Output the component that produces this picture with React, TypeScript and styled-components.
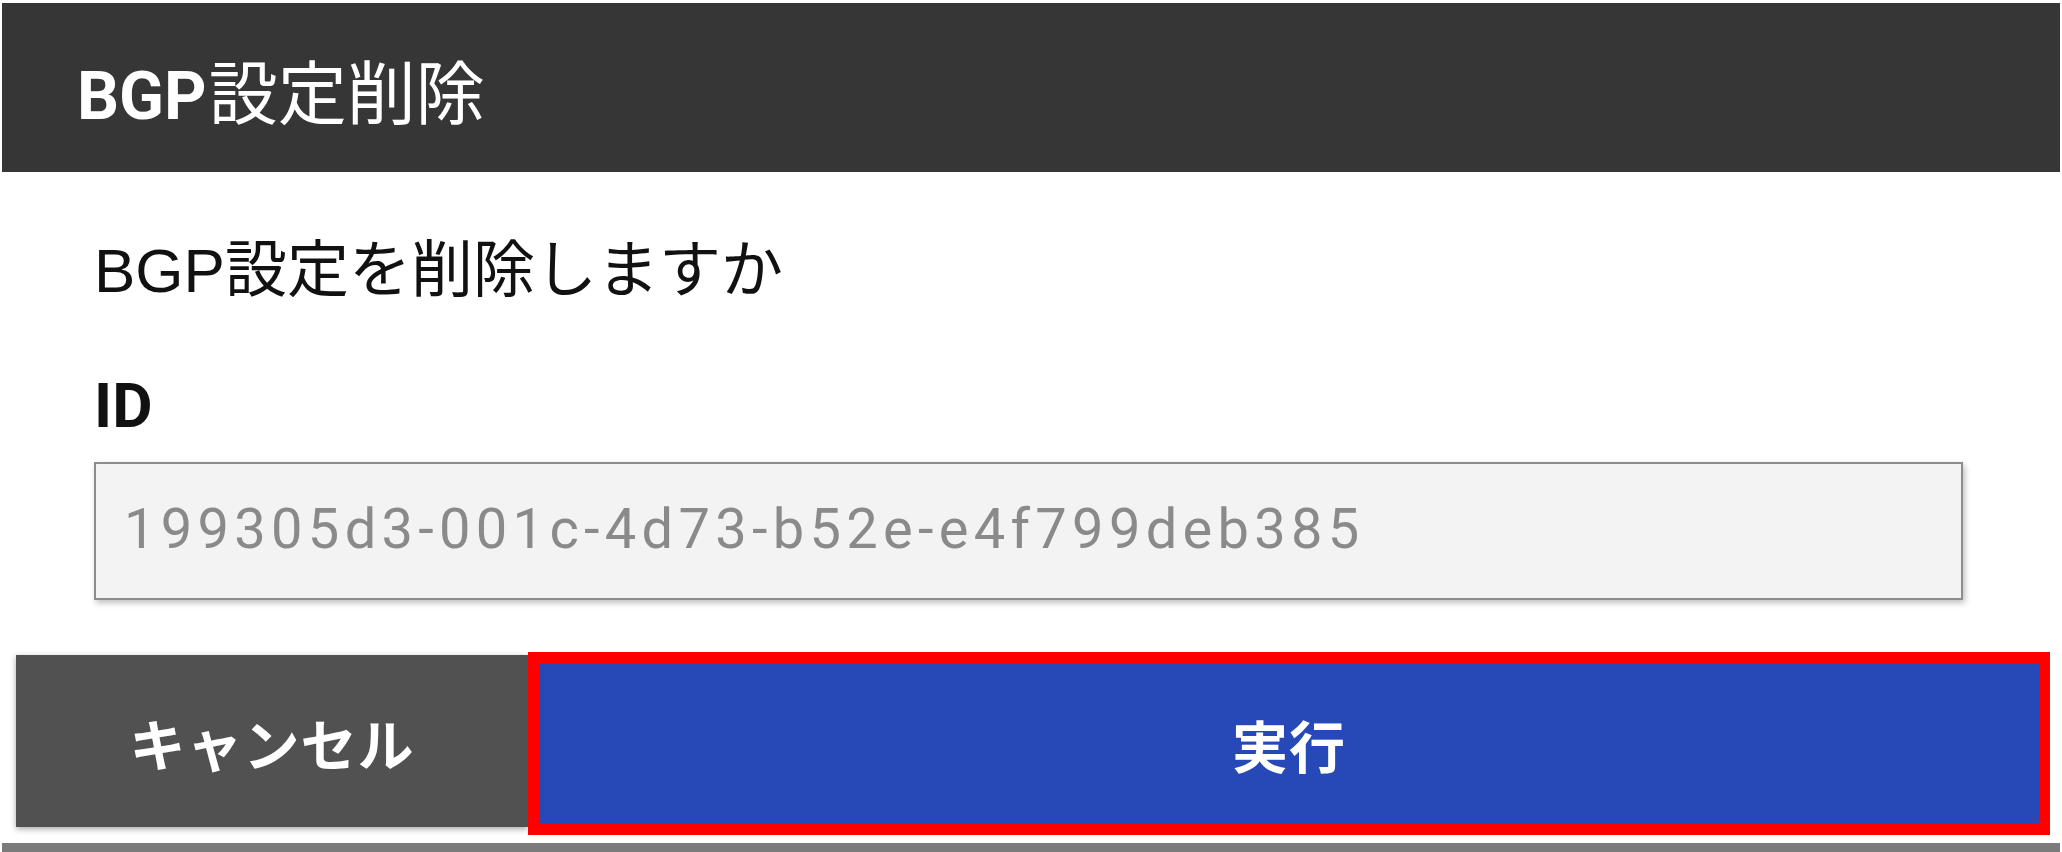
import styled, {createGlobalStyle} from 'styled-components'

const GlobalStyle = createGlobalStyle`
    html, body {
        margin: 0;
        padding: 0;
        background: #ffffff;
    }
    body {
        font-family: 'Liberation Sans', 'Noto Sans CJK JP', sans-serif;
    }
`

// dialog shell
const Dialog = styled.div`
    width: 2058px;
    margin: 3px 0 0 2px;
    display: flex;
    flex-direction: column;
`

const Header = styled.div`
    height: 169px;
    box-sizing: border-box;
    padding: 58px 0 0 75px;
    background-color: #363636;
    color: #ffffff;
`

const Title = styled.h1`
    margin: 0;
    font-family: 'Roboto', 'Noto Sans CJK JP', sans-serif;
    font-size: 69px;
    line-height: 1;
    font-weight: 400;
`

// latin part of the title is bold and a bit smaller
const Latin = styled.span`
    font-weight: 700;
    font-size: 66px;
    margin-right: 2px;
`

const Body = styled.div`
    display: flex;
    flex-direction: column;
    padding: 0 97px 0 92px;
`

const Message = styled.p`
    margin: 68px 0 0 0;
    font-family: 'Liberation Sans', 'Noto Sans CJK JP', sans-serif;
    font-size: 62px;
    line-height: 1;
    color: #111111;
`

const Label = styled.div`
    margin-top: 73px;
    font-family: 'Roboto', 'Noto Sans CJK JP', sans-serif;
    font-weight: 700;
    font-size: 62px;
    line-height: 1;
    color: #111111;
`

const Field = styled.div`
    margin-top: 25px;
    height: 138px;
    box-sizing: border-box;
    padding: 37px 0 0 28px;
    background-color: #f3f3f3;
    border: 2px solid #8c8c8c;
    box-shadow: 2px 3px 6px rgba(0, 0, 0, 0.25);
    font-family: 'Roboto', sans-serif;
    font-size: 56px;
    line-height: 1;
    letter-spacing: 5.3px;
    color: #8a8a8a;
`

const ButtonRow = styled.div`
    margin-top: 52px;
    display: flex;
    align-items: flex-start;
    padding: 0 10px 0 14px;
`

const Button = styled.button<{$primary?: boolean}>`
    display: flex;
    align-items: center;
    justify-content: center;
    box-sizing: border-box;
    margin: 0;
    padding: 0;
    cursor: pointer;
    font-family: 'Noto Sans CJK JP', sans-serif;
    font-weight: 700;
    font-size: 56px;
    letter-spacing: 1px;
    color: #ffffff;
    ${({$primary}) =>
        $primary
            ? `
        flex: 1;
        height: 183px;
        background-color: #2749b8;
        border-style: solid;
        border-color: #ff0000;
        border-width: 12px 11px;
    `
            : `
        width: 512px;
        height: 172px;
        margin-top: 3px;
        background-color: #515151;
        border: none;
        box-shadow: 0 2px 6px rgba(0, 0, 0, 0.35);
    `}
`

const BottomRule = styled.div`
    margin-top: 8px;
    height: 9px;
    background-color: #7b7b7b;
`

export default function App() {
    return (
        <>
            <GlobalStyle />
            <Dialog>
                <Header>
                    <Title>
                        <Latin>BGP</Latin>設定削除
                    </Title>
                </Header>
                <Body>
                    <Message>BGP設定を削除しますか</Message>
                    <Label>ID</Label>
                    <Field>199305d3-001c-4d73-b52e-e4f799deb385</Field>
                </Body>
                <ButtonRow>
                    <Button>キャンセル</Button>
                    <Button $primary>実行</Button>
                </ButtonRow>
                <BottomRule />
            </Dialog>
        </>
    )
}
